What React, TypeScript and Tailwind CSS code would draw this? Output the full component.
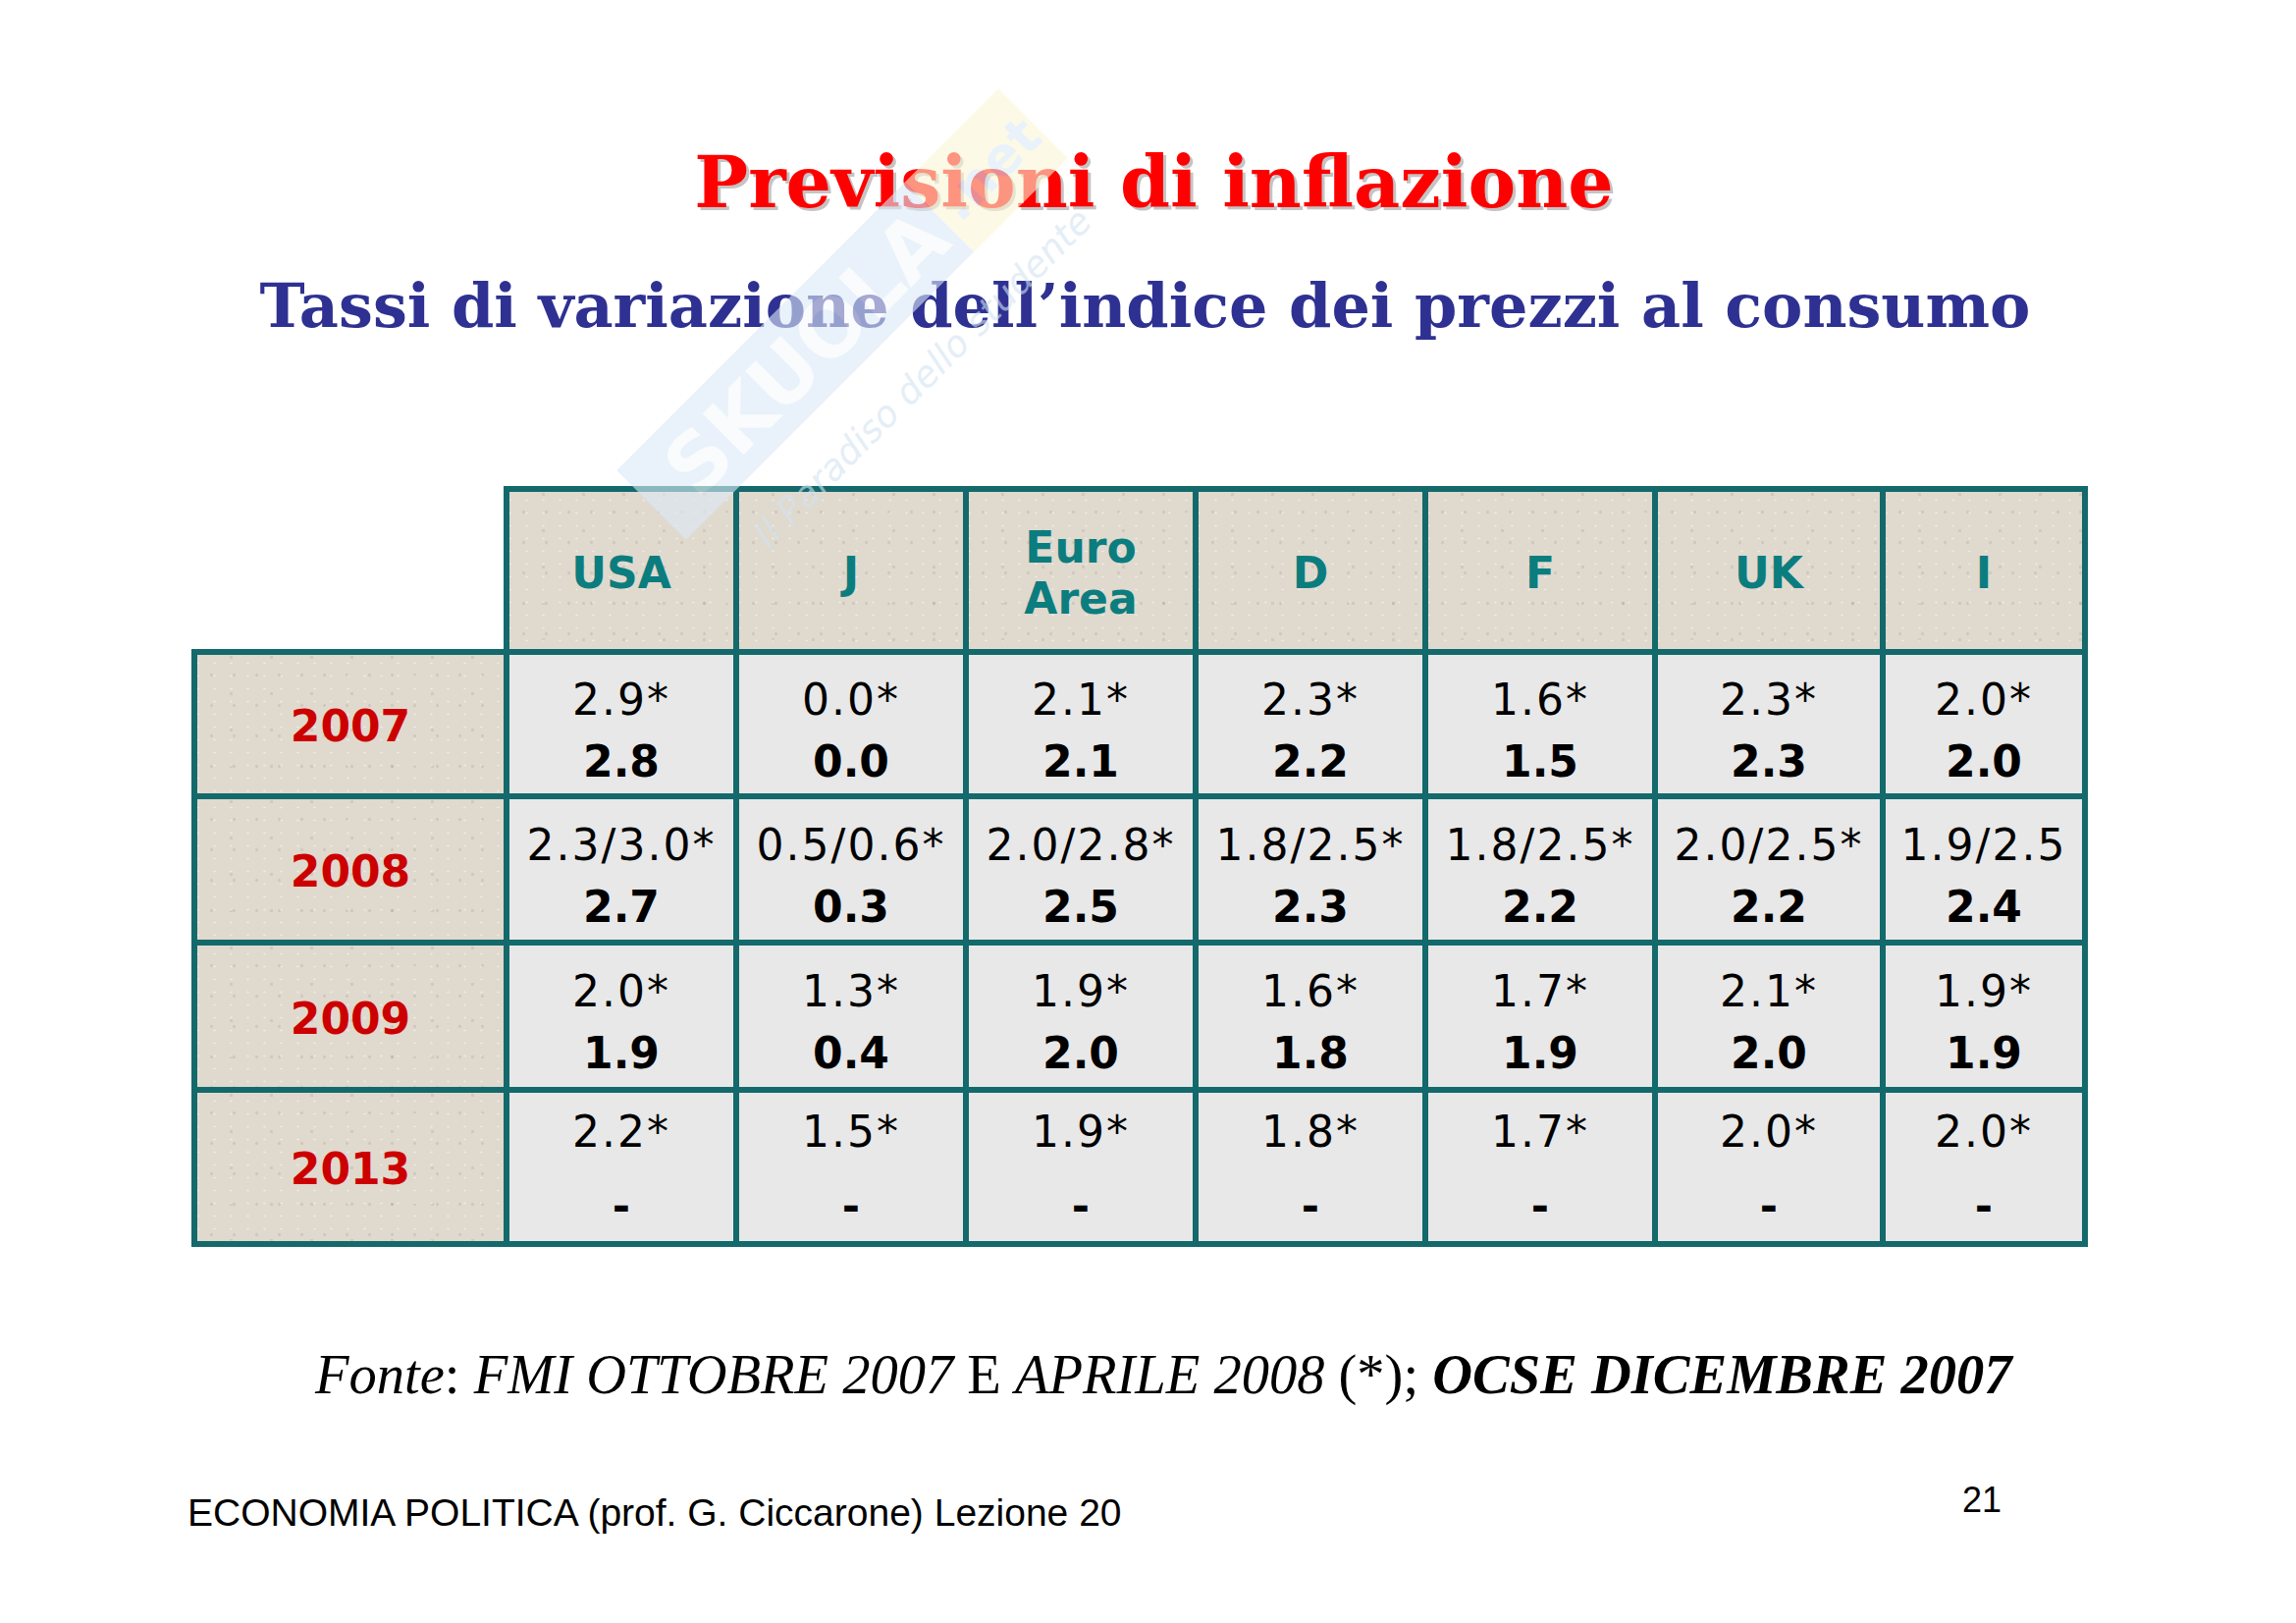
import React from 'react'

const countries = ['USA', 'J', 'Euro Area', 'D', 'F', 'UK', 'I']

const rows = [
  {
    year: '2007',
    first: ['2.9*', '0.0*', '2.1*', '2.3*', '1.6*', '2.3*', '2.0*'],
    second: ['2.8', '0.0', '2.1', '2.2', '1.5', '2.3', '2.0'],
  },
  {
    year: '2008',
    first: ['2.3/3.0*', '0.5/0.6*', '2.0/2.8*', '1.8/2.5*', '1.8/2.5*', '2.0/2.5*', '1.9/2.5'],
    second: ['2.7', '0.3', '2.5', '2.3', '2.2', '2.2', '2.4'],
  },
  {
    year: '2009',
    first: ['2.0*', '1.3*', '1.9*', '1.6*', '1.7*', '2.1*', '1.9*'],
    second: ['1.9', '0.4', '2.0', '1.8', '1.9', '2.0', '1.9'],
  },
  {
    year: '2013',
    first: ['2.2*', '1.5*', '1.9*', '1.8*', '1.7*', '2.0*', '2.0*'],
    second: ['-', '-', '-', '-', '-', '-', '-'],
  },
]

// speckled card-stock look of the beige cells
const beige =
  'bg-[#e0d9ce] [background-image:radial-gradient(rgba(150,138,120,0.22)_1px,transparent_1.6px),radial-gradient(rgba(255,255,255,0.4)_1px,transparent_1.6px),radial-gradient(rgba(140,128,110,0.18)_1.5px,transparent_2px)] [background-size:23px_31px,17px_13px,41px_37px] [background-position:3px_5px,9px_2px,14px_21px]'

function Watermark() {
  return (
    <svg
      className="absolute left-0 top-0 pointer-events-none opacity-60"
      width="2339"
      height="800"
      viewBox="0 0 2339 800"
    >
      <g transform="translate(858 320) rotate(-45)">
        <rect x="-275" y="-50" width="415" height="100" fill="#dcebf7" />
        <rect x="140" y="-50" width="135" height="100" fill="#fbf7d6" />
        <text
          x="-238"
          y="30"
          fontSize="81"
          fontWeight="700"
          fontFamily="DejaVu Sans, sans-serif"
          fill="#f6fafd"
        >
          SKUOLA
        </text>
        <text x="150" y="20" fontSize="54" fontWeight="700" fontFamily="DejaVu Sans, sans-serif" fill="#dcebf7">
          .net
        </text>
        <text
          x="-222"
          y="116"
          fontSize="37"
          fontStyle="italic"
          fontFamily="DejaVu Sans, sans-serif"
          fill="#d3e4f2"
        >
          Il Paradiso dello studente
        </text>
      </g>
    </svg>
  )
}

export default function App() {
  return (
    <div className="relative w-[2339px] h-[1653px] overflow-hidden bg-white">
      <div className="flex flex-col items-center pl-[12px]">
        <h1 className="mt-[149px] text-[73px] leading-none font-bold text-[#ff0000] font-['DejaVu_Serif',serif] [text-shadow:3px_3px_0_#c4c4c4]">
          Previsioni di inflazione
        </h1>
        <h2 className="mt-[59px] -ml-[18px] text-[62px] leading-none font-bold text-[#2e3192] font-['DejaVu_Serif',serif]">
          Tassi di variazione dell’indice dei prezzi al consumo
        </h2>
      </div>

      <div className="mt-[152px] ml-[195px] grid grid-cols-[324px_234px_234px_234px_234px_234px_232px_206px] grid-rows-[172px_147px_149px_150px_157px] font-['DejaVu_Sans',sans-serif]">
        <div className="border-r-[6px] border-b-[6px] border-[#13696b] bg-white" />
        {countries.map((c) => (
          <div
            key={c}
            className={`flex items-center justify-center pt-[5px] text-center border-t-[6px] border-r-[6px] border-b-[6px] border-[#13696b] ${beige} text-[44px] leading-[52px] font-bold text-[#0b7d7e]`}
          >
            {c === 'Euro Area' ? (
              <span>
                Euro
                <br />
                Area
              </span>
            ) : (
              c
            )}
          </div>
        ))}

        {rows.map((r, ri) => {
          const last = ri === rows.length - 1
          return (
            <React.Fragment key={r.year}>
              <div
                className={`flex items-center justify-center pt-[5px] border-l-[6px] border-r-[6px] border-b-[6px] border-[#13696b] ${beige} text-[44px] font-bold text-[#cc0000]`}
              >
                {r.year}
              </div>
              {r.first.map((v, ci) => (
                <div
                  key={ci}
                  className={`flex flex-col items-center justify-center border-r-[6px] border-b-[6px] border-[#13696b] bg-[#e8e8e8] text-[44px] leading-[63px] text-black ${
                    last ? 'pt-[4px] gap-[13px]' : 'pt-[12px]'
                  }`}
                >
                  <span className="tracking-[2px]">{v}</span>
                  <span className="font-bold">{r.second[ci]}</span>
                </div>
              ))}
            </React.Fragment>
          )
        })}
      </div>

      <p className="mt-[102px] ml-[321px] text-[56.5px] leading-none text-black font-['Liberation_Serif',serif] whitespace-nowrap">
        <i>Fonte</i>: <i>FMI OTTOBRE 2007</i> E <i>APRILE 2008</i> (*);{' '}
        <b className="italic">OCSE DICEMBRE 2007</b>
      </p>

      <div className="mt-[81px] flex items-start justify-between pl-[191px] pr-[300px] font-['Liberation_Sans',sans-serif] text-black">
        <span className="mt-[11px] text-[39px] leading-none">ECONOMIA POLITICA (prof. G. Ciccarone) Lezione 20</span>
        <span className="text-[36px] leading-none">21</span>
      </div>

      <Watermark />
    </div>
  )
}
